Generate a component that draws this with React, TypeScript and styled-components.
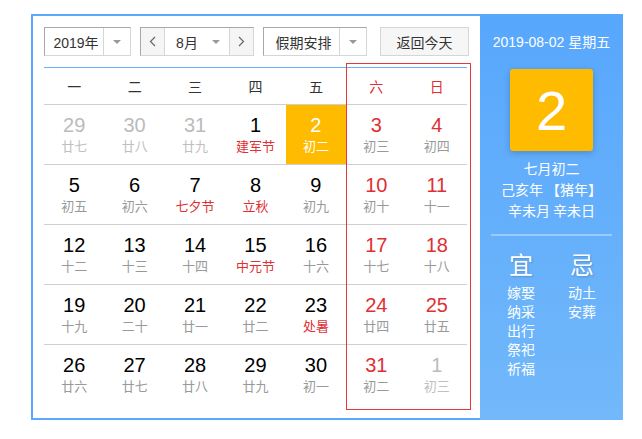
import { FC } from "react";
import styled, { createGlobalStyle } from "styled-components";

type Tone = "normal" | "faded" | "weekend";

interface IDay {
  day: number;
  lunar: string;
  tone?: Tone;
  festival?: boolean;
  selected?: boolean;
}

const weekdays = ["一", "二", "三", "四", "五", "六", "日"];

const weeks: IDay[][] = [
  [
    { day: 29, lunar: "廿七", tone: "faded" },
    { day: 30, lunar: "廿八", tone: "faded" },
    { day: 31, lunar: "廿九", tone: "faded" },
    { day: 1, lunar: "建军节", festival: true },
    { day: 2, lunar: "初二", selected: true },
    { day: 3, lunar: "初三", tone: "weekend" },
    { day: 4, lunar: "初四", tone: "weekend" },
  ],
  [
    { day: 5, lunar: "初五" },
    { day: 6, lunar: "初六" },
    { day: 7, lunar: "七夕节", festival: true },
    { day: 8, lunar: "立秋", festival: true },
    { day: 9, lunar: "初九" },
    { day: 10, lunar: "初十", tone: "weekend" },
    { day: 11, lunar: "十一", tone: "weekend" },
  ],
  [
    { day: 12, lunar: "十二" },
    { day: 13, lunar: "十三" },
    { day: 14, lunar: "十四" },
    { day: 15, lunar: "中元节", festival: true },
    { day: 16, lunar: "十六" },
    { day: 17, lunar: "十七", tone: "weekend" },
    { day: 18, lunar: "十八", tone: "weekend" },
  ],
  [
    { day: 19, lunar: "十九" },
    { day: 20, lunar: "二十" },
    { day: 21, lunar: "廿一" },
    { day: 22, lunar: "廿二" },
    { day: 23, lunar: "处暑", festival: true },
    { day: 24, lunar: "廿四", tone: "weekend" },
    { day: 25, lunar: "廿五", tone: "weekend" },
  ],
  [
    { day: 26, lunar: "廿六" },
    { day: 27, lunar: "廿七" },
    { day: 28, lunar: "廿八" },
    { day: 29, lunar: "廿九" },
    { day: 30, lunar: "初一" },
    { day: 31, lunar: "初二", tone: "weekend" },
    { day: 1, lunar: "初三", tone: "faded" },
  ],
];

const suitable = ["嫁娶", "纳采", "出行", "祭祀", "祈福"];
const avoid = ["动土", "安葬"];

const Chevron: FC<{ dir: "left" | "right" }> = ({ dir }) => (
  <svg width="7" height="11" viewBox="0 0 7 11">
    <polyline
      points={dir === "left" ? "6,1 1.5,5.5 6,10" : "1,1 5.5,5.5 1,10"}
      fill="none"
      stroke="#666"
      strokeWidth="1.2"
    />
  </svg>
);

export default function App() {
  return (
    <>
      <GlobalStyle />
      <CalendarWrapperDiv>
        <MainDiv>
          <ToolbarDiv>
            <SelectBox $width={87}>
              <SelectLabel>2019年</SelectLabel>
              <ArrowCell>
                <Caret />
              </ArrowCell>
            </SelectBox>
            <SelectBox $width={114}>
              <StepButton>
                <Chevron dir="left" />
              </StepButton>
              <SelectLabel className="month">8月</SelectLabel>
              <Caret className="inline" />
              <StepButton className="next">
                <Chevron dir="right" />
              </StepButton>
            </SelectBox>
            <SelectBox $width={104}>
              <SelectLabel>假期安排</SelectLabel>
              <ArrowCell>
                <Caret />
              </ArrowCell>
            </SelectBox>
            <TodayButton>返回今天</TodayButton>
          </ToolbarDiv>

          <GridWrapperDiv>
            <WeekHeaderDiv>
              {weekdays.map((w, i) => (
                <WeekdayDiv key={w} $weekend={i >= 5}>
                  {w}
                </WeekdayDiv>
              ))}
            </WeekHeaderDiv>
            {weeks.map((week, wi) => (
              <WeekRowDiv key={wi}>
                {week.map((d, di) => (
                  <DayCell key={di} $selected={d.selected}>
                    <DayNumber $tone={d.tone ?? "normal"} $selected={d.selected}>
                      {d.day}
                    </DayNumber>
                    <LunarText
                      $tone={d.tone ?? "normal"}
                      $festival={d.festival}
                      $selected={d.selected}
                    >
                      {d.lunar}
                    </LunarText>
                  </DayCell>
                ))}
              </WeekRowDiv>
            ))}
            <WeekendFrame />
          </GridWrapperDiv>
        </MainDiv>

        <SidePanel>
          <PanelDate>2019-08-02 星期五</PanelDate>
          <BigDayBox>2</BigDayBox>
          <LunarInfo>
            <div>七月初二</div>
            <div>己亥年 【猪年】</div>
            <div>辛未月 辛未日</div>
          </LunarInfo>
          <PanelDivider />
          <AlmanacDiv>
            <AlmanacColumn>
              <AlmanacTitle>宜</AlmanacTitle>
              {suitable.map((s) => (
                <AlmanacItem key={s}>{s}</AlmanacItem>
              ))}
            </AlmanacColumn>
            <AlmanacColumn>
              <AlmanacTitle>忌</AlmanacTitle>
              {avoid.map((s) => (
                <AlmanacItem key={s}>{s}</AlmanacItem>
              ))}
            </AlmanacColumn>
          </AlmanacDiv>
        </SidePanel>
      </CalendarWrapperDiv>
    </>
  );
}

const GlobalStyle = createGlobalStyle`
  body {
    margin: 0;
    background: #fff;
    font-family: "Liberation Sans", Arial, "Noto Sans CJK SC", sans-serif;
    color: #333;
  }
`;

const CalendarWrapperDiv = styled.div`
  display: flex;
  margin: 14px 0 0 31px;
  width: 592px;
  height: 406px;
`;

const MainDiv = styled.div`
  width: 449px;
  box-sizing: border-box;
  border: 2px solid #5ba9fc;
  border-right: none;
  padding: 11px 11px 14px 11px;
`;

const ToolbarDiv = styled.div`
  display: flex;
  gap: 9px;
  height: 29px;
  margin-bottom: 11px;
`;

const SelectBox = styled.div<{ $width: number }>`
  display: flex;
  align-items: center;
  width: ${(p) => p.$width}px;
  height: 29px;
  box-sizing: border-box;
  border: 1px solid;
  border-color: #a8a8a8 #d6d6d6 #d6d6d6 #a8a8a8;
  background: #fff;
  font-size: 14px;
  color: #333;
`;

const SelectLabel = styled.div`
  flex: 1;
  text-align: center;
  padding-left: 4px;
  &.month {
    flex: none;
    width: 40px;
    padding-left: 2px;
  }
`;

const ArrowCell = styled.div`
  display: flex;
  align-items: center;
  justify-content: center;
  width: 26px;
  height: 100%;
  border-left: 1px solid #d6d6d6;
`;

const Caret = styled.span`
  width: 0;
  height: 0;
  border-left: 4px solid transparent;
  border-right: 4px solid transparent;
  border-top: 4px solid #999;
  &.inline {
    margin: 0 9px 0 5px;
  }
`;

const StepButton = styled.div`
  display: flex;
  align-items: center;
  justify-content: center;
  width: 24px;
  height: 100%;
  background: #f5f5f5;
  border-right: 1px solid #d6d6d6;
  &.next {
    border-right: none;
    border-left: 1px solid #d6d6d6;
    margin-left: auto;
  }
`;

const TodayButton = styled.div`
  display: flex;
  align-items: center;
  justify-content: center;
  margin-left: auto;
  width: 89px;
  height: 29px;
  box-sizing: border-box;
  border: 1px solid #d6d6d6;
  background: #f6f6f6;
  font-size: 14px;
  color: #333;
`;

const GridWrapperDiv = styled.div`
  position: relative;
  width: 423px;
`;

const WeekHeaderDiv = styled.div`
  display: grid;
  grid-template-columns: repeat(7, 1fr);
  height: 36px;
  border-top: 1px solid #6aaffc;
  border-bottom: 1px solid #cfcfcf;
`;

const WeekdayDiv = styled.div<{ $weekend: boolean }>`
  display: flex;
  align-items: center;
  justify-content: center;
  font-size: 14px;
  color: ${(p) => (p.$weekend ? "#e02f33" : "#333")};
`;

const WeekRowDiv = styled.div`
  display: grid;
  grid-template-columns: repeat(7, 1fr);
  height: 60px;
  box-sizing: border-box;
  border-bottom: 1px solid #cfcfcf;
  &:nth-last-of-type(2) {
    border-bottom: none;
  }
`;

const DayCell = styled.div<{ $selected?: boolean }>`
  display: flex;
  flex-direction: column;
  align-items: center;
  padding-top: 9px;
  background: ${(p) => (p.$selected ? "#ffbb00" : "transparent")};
`;

const numberColor = (tone: Tone, selected?: boolean) => {
  if (selected) return "#fff";
  if (tone === "faded") return "#bbb";
  if (tone === "weekend") return "#e02f33";
  return "#000";
};

const DayNumber = styled.div<{ $tone: Tone; $selected?: boolean }>`
  font-size: 20px;
  line-height: 22px;
  color: ${(p) => numberColor(p.$tone, p.$selected)};
`;

const LunarText = styled.div<{
  $tone: Tone;
  $festival?: boolean;
  $selected?: boolean;
}>`
  margin-top: 2px;
  font-size: 13px;
  line-height: 16px;
  font-family: "Noto Sans CJK SC", sans-serif;
  color: ${(p) =>
    p.$selected
      ? "#fff"
      : p.$festival
      ? "#e02f33"
      : p.$tone === "faded"
      ? "#c0c0c0"
      : "#999"};
`;

const WeekendFrame = styled.div`
  position: absolute;
  top: -4px;
  bottom: -5px;
  left: calc(500% / 7);
  right: -4px;
  border: 1px solid #e8363a;
  pointer-events: none;
`;

const SidePanel = styled.div`
  width: 143px;
  display: flex;
  flex-direction: column;
  align-items: center;
  padding-top: 18px;
  box-sizing: border-box;
  background: linear-gradient(180deg, #57a7fd 0%, #72b8fa 100%);
  color: #fff;
`;

const PanelDate = styled.div`
  font-size: 14px;
  line-height: 20px;
`;

const BigDayBox = styled.div`
  display: flex;
  align-items: center;
  justify-content: center;
  margin-top: 17px;
  width: 83px;
  height: 82px;
  border-radius: 3px;
  background: #ffbb00;
  box-shadow: 0 2px 6px rgba(0, 0, 0, 0.2);
  font-size: 56px;
  color: #fff;
`;

const LunarInfo = styled.div`
  margin-top: 7px;
  font-size: 14px;
  line-height: 21px;
  text-align: center;
  font-family: "Noto Sans CJK SC", sans-serif;
`;

const PanelDivider = styled.div`
  margin-top: 13px;
  width: 121px;
  height: 2px;
  background: rgba(255, 255, 255, 0.35);
`;

const AlmanacDiv = styled.div`
  display: flex;
  gap: 1px;
  margin-top: 13px;
`;

const AlmanacColumn = styled.div`
  display: flex;
  flex-direction: column;
  align-items: center;
  width: 60px;
`;

const AlmanacTitle = styled.div`
  font-size: 24px;
  line-height: 30px;
  margin-bottom: 4px;
  font-family: "Noto Sans CJK SC", sans-serif;
  text-shadow: 1px 1px 2px rgba(0, 0, 0, 0.2);
`;

const AlmanacItem = styled.div`
  font-size: 14px;
  line-height: 19px;
  font-family: "Noto Sans CJK SC", sans-serif;
`;
